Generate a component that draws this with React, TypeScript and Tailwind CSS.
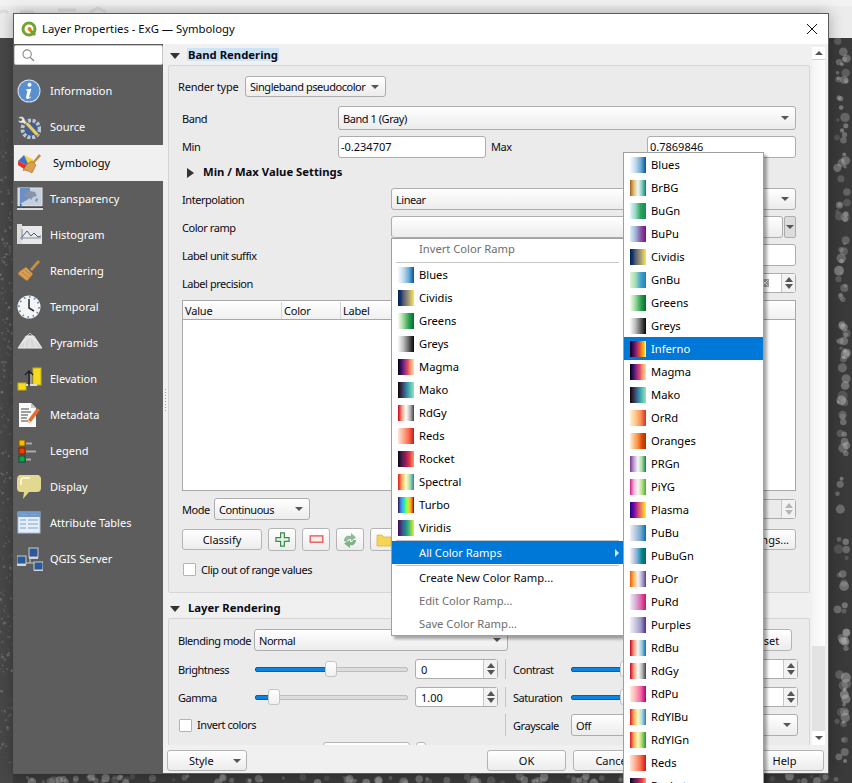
import React from "react";

const sideItems = [
  "Information",
  "Source",
  "Symbology",
  "Transparency",
  "Histogram",
  "Rendering",
  "Temporal",
  "Pyramids",
  "Elevation",
  "Metadata",
  "Legend",
  "Display",
  "Attribute Tables",
  "QGIS Server",
];

const ramps: Record<string, string> = {
  Blues: "bg-[linear-gradient(90deg,#f7fbff,#c6dbef,#6baed6,#08519c)]",
  BrBG: "bg-[linear-gradient(90deg,#a6611a,#dfc27d,#f5f5f5,#80cdc1,#018571)]",
  BuGn: "bg-[linear-gradient(90deg,#e5f5f9,#99d8c9,#2ca25f,#1b8c4e)]",
  BuPu: "bg-[linear-gradient(90deg,#e0ecf4,#9ebcda,#8856a7,#810f7c)]",
  Cividis: "bg-[linear-gradient(90deg,#00224e,#123570,#575c6d,#7c7b78,#a59c74,#d3c164,#fee838)]",
  GnBu: "bg-[linear-gradient(90deg,#e0f3db,#a8ddb5,#43a2ca,#1f80b8)]",
  Greens: "bg-[linear-gradient(90deg,#f7fcf5,#a1d99b,#31a354,#006d2c)]",
  Greys: "bg-[linear-gradient(90deg,#fafafa,#bdbdbd,#636363,#050505)]",
  Inferno: "bg-[linear-gradient(90deg,#000004,#420a68,#932667,#dd513a,#fca50a,#fcff64)]",
  Magma: "bg-[linear-gradient(90deg,#000004,#3b0f70,#8c2981,#de4968,#fe9f6d,#fcdcb0)]",
  Mako: "bg-[linear-gradient(90deg,#0b0405,#3e3356,#357ba3,#49c1ad,#a0dfb9)]",
  OrRd: "bg-[linear-gradient(90deg,#fef0d9,#fdcc8a,#fc8d59,#d7301f)]",
  Oranges: "bg-[linear-gradient(90deg,#feedde,#fdbe85,#fd8d3c,#d94701,#a63603)]",
  PRGn: "bg-[linear-gradient(90deg,#7b3294,#c2a5cf,#f7f7f7,#a6dba0,#008837)]",
  PiYG: "bg-[linear-gradient(90deg,#d01c8b,#f1b6da,#f7f7f7,#b8e186,#4dac26)]",
  Plasma: "bg-[linear-gradient(90deg,#0d0887,#7e03a8,#cc4778,#f89540,#f0f921)]",
  PuBu: "bg-[linear-gradient(90deg,#f1eef6,#bdc9e1,#74a9cf,#0570b0)]",
  PuBuGn: "bg-[linear-gradient(90deg,#f6eff7,#bdc9e1,#67a9cf,#02818a,#016c59)]",
  PuOr: "bg-[linear-gradient(90deg,#e66101,#fdb863,#f7f7f7,#b2abd2,#5e3c99)]",
  PuRd: "bg-[linear-gradient(90deg,#f1eef6,#d7b5d8,#df65b0,#ce1256)]",
  Purples: "bg-[linear-gradient(90deg,#f2f0f7,#cbc9e2,#9e9ac8,#54278f)]",
  RdBu: "bg-[linear-gradient(90deg,#ca0020,#f4a582,#f7f7f7,#92c5de,#0571b0)]",
  RdGy: "bg-[linear-gradient(90deg,#ca0020,#f4a582,#ffffff,#bababa,#404040)]",
  RdPu: "bg-[linear-gradient(90deg,#feebe2,#fbb4b9,#f768a1,#ae017e)]",
  RdYlBu: "bg-[linear-gradient(90deg,#d7191c,#fdae61,#ffffbf,#abd9e9,#2c7bb6)]",
  RdYlGn: "bg-[linear-gradient(90deg,#d7191c,#fdae61,#ffffc0,#a6d96a,#1a9641)]",
  Reds: "bg-[linear-gradient(90deg,#fee5d9,#fcae91,#fb6a4a,#cb181d)]",
  Rocket: "bg-[linear-gradient(90deg,#03051a,#4c1d4b,#a11a5b,#e83f3f,#f69c73)]",
  Spectral: "bg-[linear-gradient(90deg,#d7191c,#fdae61,#ffffbf,#abdda4,#2b83ba)]",
  Turbo: "bg-[linear-gradient(90deg,#30123b,#4662d7,#36aaf9,#1ae4b6,#72fe5e,#c8ef34,#faba39,#f66b19,#7a0403)]",
  Viridis: "bg-[linear-gradient(90deg,#440154,#3b528b,#21918c,#5ec962,#fde725)]",
};

const favourites = ["Blues", "Cividis", "Greens", "Greys", "Magma", "Mako", "RdGy", "Reds", "Rocket", "Spectral", "Turbo", "Viridis"];
const allRamps = [
  "Blues", "BrBG", "BuGn", "BuPu", "Cividis", "GnBu", "Greens", "Greys", "Inferno", "Magma", "Mako", "OrRd",
  "Oranges", "PRGn", "PiYG", "Plasma", "PuBu", "PuBuGn", "PuOr", "PuRd", "Purples", "RdBu", "RdGy", "RdPu",
  "RdYlBu", "RdYlGn", "Reds", "Rocket",
];

function SideIcon({ name }: { name: string }) {
  switch (name) {
    case "Information":
      return (
        <svg viewBox="0 0 24 24" className="h-6 w-6">
          <circle cx="12" cy="12" r="11.5" fill="#d6e2f2" />
          <circle cx="12" cy="12" r="10.5" fill="#5a8fd0" />
          <path d="M12.6 3.8a2 2 0 1 1 -.1 4 2 2 0 0 1 .1-4zM9 10.4l5.4-.6-2.3 8c-.1.5.3.6 1.6-.3l.4.6c-1.7 2-5.4 3-5-.2l1.3-5.6c.1-.8-.6-.8-1.5-.8z" fill="#fff" />
        </svg>
      );
    case "Source":
      return (
        <svg viewBox="0 0 24 24" className="h-6 w-6">
          <circle cx="14" cy="14" r="8.5" fill="none" stroke="#b9c6d8" strokeWidth="4" strokeDasharray="3 1.6" />
          <circle cx="14" cy="14" r="6.5" fill="#3f5f9c" />
          <path d="M1 3c2-2 5-2 6 0 1 1 1 2 1 3l4 3-2 2-4-3c-2 .5-4.500 0-5-3l3 1 1-2z" fill="#e8e8e8" stroke="#555" strokeWidth=".5" />
          <path d="M8 9l3-2 11 12-3 2z" fill="#e8cf6a" stroke="#6b6033" strokeWidth=".6" />
        </svg>
      );
    case "Symbology":
      return (
        <svg viewBox="0 0 26 24" className="h-6 w-[26px]">
          <path d="M7 4l10 5-5 6z" fill="#f2d33a" />
          <path d="M1 10l6-6 5 11z" fill="#3d70c9" />
          <path d="M1 10l11 5-2 5L1 14z" fill="#e4342c" />
          <path d="M15 12l7-9 2 2-8 8.500z" fill="#bf8b45" />
          <path d="M10 13l5-3 4 4-4 8-6-3-3 .5z" fill="#d9a050" stroke="#9c6a28" strokeWidth=".6" />
        </svg>
      );
    case "Transparency":
      return (
        <svg viewBox="0 0 26 24" className="h-6 w-[26px]">
          <rect x="1" y="1" width="24" height="18" fill="#c4cfe0" stroke="#e8e8e8" />
          <path d="M3 1h10v10L3 17z" fill="#6d8fc4" />
          <path d="M8 7l5-3 5 1 2 4-4 1-2 3-2-3-4 0zM19 11l2 1-1 3-2-1z" fill="#8894a6" />
          <rect x="0" y="19.500" width="26" height="1" fill="#333" />
          <rect x="0" y="21" width="26" height="2" fill="#d8d8d8" />
          <rect x="3" y="17" width="1.500" height="4" fill="#2f63b0" />
        </svg>
      );
    case "Histogram":
      return (
        <svg viewBox="0 0 26 24" className="h-6 w-[26px]">
          <rect x="1" y="3" width="24" height="18" fill="#e8e8e8" />
          <rect x="0" y="1" width="5" height="20" fill="#dcdcdc" />
          <path d="M5 17V6M3 15h21" stroke="#777" strokeWidth=".8" fill="none" />
          <path d="M5 14l5-6 4 5 3-3 4 4 3-1" stroke="#3d5f98" strokeWidth="1" fill="none" />
        </svg>
      );
    case "Rendering":
      return (
        <svg viewBox="0 0 24 24" className="h-6 w-6">
          <path d="M13 10l8-9 2 2-8 9z" fill="#c58f45" />
          <path d="M9 8l7 7-6 7-9-7 1-2z" fill="#d99f55" stroke="#a9732d" strokeWidth=".7" />
          <path d="M5 13l7 6M8 11l6 5" stroke="#a9732d" strokeWidth=".7" />
        </svg>
      );
    case "Temporal":
      return (
        <svg viewBox="0 0 24 24" className="h-6 w-6">
          <circle cx="12" cy="12" r="11.5" fill="#f4f4f4" />
          <circle cx="12" cy="12" r="10" fill="none" stroke="#5c80b8" strokeWidth="1.600" strokeDasharray="1.600 3.600" />
          <path d="M12 4v9l5 3" stroke="#333" strokeWidth="1.600" fill="none" />
        </svg>
      );
    case "Pyramids":
      return (
        <svg viewBox="0 0 26 24" className="h-6 w-[26px]">
          <path d="M9 5h8l8 12H1z" fill="#d8d8d8" stroke="#eee" strokeWidth=".8" />
          <path d="M13 2l-3 3h6zM5 11l8-6 8 6M3 14l10-9 10 9M13 5v12M9 8l-2 9M17 8l2 9" stroke="#f5f5f5" strokeWidth=".6" fill="none" />
          <rect x="1" y="17" width="24" height="1" fill="#aaa" />
        </svg>
      );
    case "Elevation":
      return (
        <svg viewBox="0 0 26 24" className="h-6 w-[26px]">
          <rect x="16" y="1" width="8" height="17" fill="#f5dc1d" stroke="#c7ae10" />
          <rect x="1" y="16" width="8" height="7" fill="#f5dc1d" stroke="#c7ae10" />
          <path d="M9 18h11" stroke="#ddd" strokeWidth="2" />
          <path d="M12 19V5M8 8l4-4 4 4" stroke="#222" strokeWidth="1.500" fill="none" />
          <path d="M14 19V7" stroke="#ddd" strokeWidth="1" />
        </svg>
      );
    case "Metadata":
      return (
        <svg viewBox="0 0 24 24" className="h-6 w-6">
          <path d="M2 0h12l5 5v19H2z" fill="#fafafa" />
          <path d="M14 0v5h5z" fill="#c8c8c8" />
          <path d="M4 6h8M4 9h10M4 12h7M4 15h6M4 18h10" stroke="#444" strokeWidth="1" />
          <path d="M11 17l9-12 3 2-9 12-3 1z" fill="#e56d2f" />
          <path d="M11 17l3 2-3 1z" fill="#f3d9b5" />
        </svg>
      );
    case "Legend":
      return (
        <svg viewBox="0 0 24 24" className="h-6 w-6">
          <rect x="2" y="1" width="6" height="6" fill="#fcb900" stroke="#7a5a00" />
          <rect x="2" y="9" width="6" height="6" fill="#ee4000" stroke="#7a2000" />
          <rect x="2" y="17" width="6" height="6" fill="#09a84a" stroke="#04502a" />
          <path d="M9 4.500h6M9 12.500h10M9 20.500h5" stroke="#aaa" strokeWidth="2" />
        </svg>
      );
    case "Display":
      return (
        <svg viewBox="0 0 24 24" className="h-6 w-6">
          <path d="M5 0h14a4 4 0 0 1 5 4v9a4 4 0 0 1-4 4h-8l-6 7 1-7H4a4 4 0 0 1-4-4V4a4 4 0 0 1 5-4z" fill="#e3d88f" />
          <path d="M4 10V5a2 2 0 0 1 2-2h7" stroke="#fffbe0" strokeWidth="1.500" fill="none" />
        </svg>
      );
    case "Attribute Tables":
      return (
        <svg viewBox="0 0 24 24" className="h-6 w-6">
          <rect x="1" y="1" width="22" height="21" fill="#e6eef8" stroke="#a8c0dd" />
          <rect x="1" y="1" width="22" height="5" fill="#6f9bd1" />
          <path d="M4 3.500h6M14 3.500h6M3 9h6M11 9h10M3 13h6M11 13h10M3 17h6M11 17h10" stroke="#7fa3cf" strokeWidth="1.200" />
        </svg>
      );
    default:
      return (
        <svg viewBox="0 0 26 24" className="h-6 w-[26px]">
          <path d="M13 10v6M4 17v-1h18" stroke="#ccc" strokeWidth="1" fill="none" />
          <rect x="12" y="1" width="9" height="9" fill="#2a5a9a" stroke="#ccc" />
          <rect x="12" y="10" width="9" height="2" fill="#d4d4d4" />
          <rect x="0" y="9" width="9" height="8" fill="#2a5a9a" stroke="#ccc" />
          <rect x="0" y="17" width="9" height="2" fill="#d4d4d4" />
          <rect x="17" y="15" width="9" height="8" fill="#2a5a9a" stroke="#ccc" />
          <rect x="17" y="23" width="9" height="1" fill="#d4d4d4" />
        </svg>
      );
  }
}

function Arrow({ className = "" }: { className?: string }) {
  return <span className={`h-0 w-0 shrink-0 border-x-[4px] border-t-[4px] border-x-transparent border-t-[#555] ${className}`} />;
}

function Combo({ text, className = "" }: { text?: string; className?: string }) {
  return (
    <div className={`flex h-full items-center justify-between rounded-[3px] border border-[#adadad] bg-gradient-to-b from-white to-[#ececec] pl-[4px] pr-[6px] ${className}`}>
      <span>{text}</span>
      <Arrow />
    </div>
  );
}

function Input({ text, className = "" }: { text?: string; className?: string }) {
  return (
    <div className={`flex h-full items-center rounded-[3px] border border-[#adadad] bg-white pb-[2px] pl-[2px] tracking-normal ${className}`}>{text}</div>
  );
}

function Spin({ text, className = "", disabled = false, clear = false }: { text?: string; className?: string; disabled?: boolean; clear?: boolean }) {
  const col = disabled ? "border-b-[#b5b5b5]" : "border-b-[#555]";
  const colT = disabled ? "border-t-[#b5b5b5]" : "border-t-[#555]";
  return (
    <div className={`flex h-full items-center rounded-[3px] border border-[#adadad] pl-[5px] tracking-normal ${disabled ? "bg-[#ebebeb]" : "bg-white"} ${className}`}>
      <span className="flex-1">{text}</span>
      {clear && (
        <svg viewBox="0 0 8 8" className="mr-[12px] h-[8px] w-[8px]">
          <rect width="8" height="8" fill="#a8a8a8" />
          <path d="M1.500 1.500l5 5M6.500 1.500l-5 5" stroke="#fff" strokeWidth="1" />
        </svg>
      )}
      <div className="flex h-full w-[14px] flex-col items-center justify-center gap-[2px] border-l border-[#c8c8c8] bg-[#f2f2f2]">
        <span className={`h-0 w-0 border-x-[4px] border-b-[5px] border-x-transparent ${col}`} />
        <span className={`h-0 w-0 border-x-[4px] border-t-[5px] border-x-transparent ${colT}`} />
      </div>
    </div>
  );
}

function Btn({ text, className = "", children }: { text?: string; className?: string; children?: React.ReactNode }) {
  return (
    <div className={`flex items-center justify-center rounded-[3px] border border-[#b4b4b4] bg-gradient-to-b from-white to-[#ececec] tracking-normal ${className}`}>
      {text}
      {children}
    </div>
  );
}

function Check({ className = "" }: { className?: string }) {
  return <span className={`block h-[13px] w-[13px] shrink-0 rounded-[1px] border border-[#b4b4b4] bg-white ${className}`} />;
}

function Slider({ value, className = "" }: { value: number; className?: string }) {
  return (
    <div className={`relative flex h-[16px] items-center ${className}`}>
      <div className="h-[5px] w-full rounded-[2px] border border-[#bdbdbd] bg-[#dcdcdc]" />
      <div className="absolute left-0 h-[5px] rounded-l-[2px] border border-[#0a5fa8] bg-[#0a84e0]" style={{ width: value }} />
      <div className="absolute top-0 h-[16px] w-[12px] rounded-[3px] border border-[#c4c4c4] bg-gradient-to-b from-white to-[#f0f0f0]" style={{ left: value - 1 }} />
    </div>
  );
}

function Swatch({ name }: { name: string }) {
  return <span className={`block h-4 w-4 shrink-0 ${ramps[name]}`} />;
}

function MenuItem({ name, active = false }: { name: string; active?: boolean }) {
  return (
    <div className={`flex h-[23px] items-center gap-[5px] pl-[6px] ${active ? "bg-[#0078d7] text-white" : "text-black"}`}>
      <Swatch name={name} />
      <span>{name}</span>
    </div>
  );
}

function MenuSep() {
  return (
    <div className="flex h-[2px] items-center px-[4px]">
      <div className="h-px w-full bg-[#c4c4c4]" />
    </div>
  );
}

function Backdrop() {
  // speckled raster behind the dialog
  const dots: { x: number; y: number; r: number; o: number }[] = [];
  let seed = 7;
  const rnd = () => {
    seed = (seed * 16807) % 2147483647;
    return seed / 2147483647;
  };
  for (let i = 0; i < 130; i++) {
    dots.push({ x: 837 + rnd() * 10, y: 40 + rnd() * 740, r: 1.5 + rnd() * 3.5, o: 0.2 + rnd() * 0.3 });
  }
  for (let i = 0; i < 110; i++) {
    dots.push({ x: 20 + rnd() * 830, y: 776 + rnd() * 7, r: 1.5 + rnd() * 3, o: 0.15 + rnd() * 0.35 });
  }
  for (let i = 0; i < 220; i++) {
    dots.push({ x: rnd() * 12, y: 130 + rnd() * 640, r: 0.5 + rnd() * 1, o: 0.08 + rnd() * 0.22 });
  }
  return (
    <svg className="absolute inset-0" width="852" height="783">
      <rect width="852" height="783" fill="#3a3a3a" />
      <rect x="0" y="38" width="13" height="745" fill="#474747" />
      {dots.map((d, i) => (
        <circle key={i} cx={d.x} cy={d.y} r={d.r} fill="#b8b8b8" opacity={d.o} />
      ))}
      <rect width="852" height="38" fill="#ececec" />
      <rect x="0" y="0" width="852" height="6" fill="#f2f2f2" />
      <path d="M0 13a5 5 0 0 1 8 0M20 12h14M58 10h18M90 12l8-4 8 4" stroke="#dcdcdc" strokeWidth="3" fill="none" />
    </svg>
  );
}

export default function App() {
  return (
    <div className="relative h-[783px] w-[852px] overflow-hidden whitespace-nowrap font-['Noto_Sans',sans-serif] text-[11px] leading-none text-[#0a0a14]">
      <Backdrop />

      <div className="absolute left-[13px] top-[13px] flex h-[761px] w-[816px] flex-col border border-[#5a5a5a] bg-[#f0f0f0] shadow-[0_0_14px_rgba(0,0,0,0.3)]">
        {/* title bar */}
        <div className="flex h-[30px] shrink-0 items-center bg-white pl-[7px] pr-[10px]">
          <svg viewBox="0 0 16 16" className="h-4 w-4">
            <circle cx="8" cy="8" r="6" fill="none" stroke="#6fa52c" strokeWidth="3" />
            <path d="M9 9l5 5" stroke="#6fa52c" strokeWidth="3" />
            <circle cx="8.500" cy="8" r="2" fill="#ee7913" />
          </svg>
          <span className="ml-[5px] text-[11.3px]">Layer Properties - ExG — Symbology</span>
          <svg viewBox="0 0 12 12" className="ml-auto h-[12px] w-[12px]">
            <path d="M1 1l10 10M11 1L1 11" stroke="#111" strokeWidth="1" />
          </svg>
        </div>

        <div className="flex min-h-0 flex-1">
          {/* sidebar */}
          <div className="flex w-[149px] shrink-0 flex-col bg-[#5d5d5d]">
            <div className="mt-px flex h-[20px] items-center rounded-[2px] border border-[#c8c8c8] bg-white pl-[7px]">
              <svg viewBox="0 0 14 14" className="h-[13px] w-[13px]">
                <circle cx="5.500" cy="5.500" r="4.500" fill="none" stroke="#888" strokeWidth="1.200" />
                <path d="M9 9l4 4" stroke="#888" strokeWidth="1.400" />
              </svg>
            </div>
            <div className="pt-[8px]">
              {sideItems.map((name) => {
                const active = name === "Symbology";
                return (
                  <div
                    key={name}
                    className={`flex h-[36px] items-center pl-[3px] ${active ? "bg-[#f0f0f0] text-black" : "text-white"}`}
                  >
                    <span className="flex w-[33px] shrink-0 justify-start">
                      <SideIcon name={name} />
                    </span>
                    <span className={active ? "ml-[3px] pb-[2px]" : "pb-[2px]"}>{name}</span>
                  </div>
                );
              })}
            </div>
          </div>

          {/* right side */}
          <div className="flex min-w-0 flex-1 flex-col">
            <div className="flex h-[701px] shrink-0">
              {/* splitter */}
              <div className="flex w-[5px] shrink-0 flex-col items-center justify-center gap-[2px] pt-[10px]">
                {[0, 1, 2, 3, 4, 5, 6, 7].map((i) => (
                  <span key={i} className="h-px w-px bg-[#a0a0a0]" />
                ))}
              </div>

              {/* scroll content */}
              <div className="w-[642px] shrink-0 overflow-hidden tracking-[-0.45px]">
                <div className="mt-[3px] flex h-[18px] items-center pb-[3px] pl-[2px]">
                  <span className="mt-[3px] h-0 w-0 border-x-[5px] border-t-[6px] border-x-transparent border-t-[#333]" />
                  <span className="ml-[7px] bg-[#cde4f7] px-px py-px text-[11.3px] font-bold tracking-normal">Band Rendering</span>
                </div>

                <div className="h-[528px] rounded-[2px] border border-[#d6d6d6] bg-[#ebebeb] px-[13px]">
                  <div className="-ml-[4px] mt-[10px] flex h-[21px] items-center">
                    <span className="w-[67px] tracking-[-0.2px]">Render type</span>
                    <Combo text="Singleband pseudocolor" className="w-[141px]" />
                  </div>
                  <div className="mt-[9px] flex h-[24px] items-center">
                    <span className="w-[156px]">Band</span>
                    <Combo text="Band 1 (Gray)" className="flex-1" />
                  </div>
                  <div className="mt-[6px] flex h-[22px] items-center">
                    <span className="w-[156px] pb-[2px]">Min</span>
                    <Input text="-0.234707" className="w-[148px]" />
                    <span className="ml-[5px] w-[156px] pb-[2px]">Max</span>
                    <Input text="0.7869846" className="flex-1" />
                  </div>
                  <div className="mt-[7px] flex h-[16px] items-center pl-[5px]">
                    <span className="h-0 w-0 border-y-[5px] border-l-[7px] border-y-transparent border-l-[#333]" />
                    <span className="ml-[9px] pb-[2px] text-[11.3px] font-bold tracking-normal">Min / Max Value Settings</span>
                  </div>
                  <div className="mt-[7px] flex h-[22px] items-center">
                    <span className="w-[209px]">Interpolation</span>
                    <Combo text="Linear" className="flex-1" />
                  </div>
                  <div className="mt-[6px] flex h-[22px] items-center">
                    <span className="w-[209px]">Color ramp</span>
                    <div className="h-full flex-1 rounded-[3px] border border-[#adadad] bg-gradient-to-b from-white to-[#ececec]" />
                    <div className="ml-px flex h-full w-[12px] items-center justify-center rounded-[2px] border border-[#adadad] bg-[#dcdcdc]">
                      <Arrow />
                    </div>
                  </div>
                  <div className="mt-[6px] flex h-[22px] items-center">
                    <span className="w-[209px]">Label unit suffix</span>
                    <Input className="flex-1" />
                  </div>
                  <div className="mt-[7px] flex h-[20px] items-center">
                    <span className="w-[209px] pt-px">Label precision</span>
                    <Spin className="flex-1" clear />
                  </div>
                  <div className="mt-[7px] h-[191px] border border-[#a8a8a8] bg-white">
                    <div className="flex h-[19px] border-b border-[#a8a8a8] bg-gradient-to-b from-white to-[#f0f0f0] pt-px tracking-[-0.2px]">
                      <span className="flex w-[99px] items-center border-r border-[#d4d4d4] pl-[2px]">Value</span>
                      <span className="flex w-[59px] items-center border-r border-[#d4d4d4] pl-[2px]">Color</span>
                      <span className="flex flex-1 items-center pl-[2px]">Label</span>
                    </div>
                  </div>
                  <div className="mt-[7px] flex h-[22px] items-center">
                    <span className="w-[32px] pt-px">Mode</span>
                    <Combo text="Continuous" className="w-[96px]" />
                    <div className="ml-auto h-[20px] w-[120px]">
                      <Spin disabled />
                    </div>
                  </div>
                  <div className="mt-[8px] flex h-[23px] items-center gap-[6px]">
                    <Btn text="Classify" className="h-[21px] w-[80px]" />
                    <Btn className="h-full w-[28px]">
                      <svg viewBox="0 0 16 16" className="h-[15px] w-[15px]">
                        <path d="M6 1h4v5h5v4h-5v5H6v-5H1V6h5z" fill="#e8f3e6" stroke="#3f8a4c" strokeWidth="1.300" />
                      </svg>
                    </Btn>
                    <Btn className="h-full w-[28px]">
                      <svg viewBox="0 0 16 10" className="h-[9px] w-[15px]">
                        <rect x="1" y="1" width="14" height="7" fill="#fdeeee" stroke="#e84b4b" strokeWidth="1.400" />
                      </svg>
                    </Btn>
                    <Btn className="h-full w-[28px]">
                      <svg viewBox="0 0 16 16" className="h-[16px] w-[16px]">
                        <path d="M2 9c0-4 3-6 7-5V1l5 4.500L9 9V7c-2-.5-4 .5-4 3z" fill="#8cbc96" />
                        <path d="M14 8c0 4-3 6-6 5v3l-6-4.500L8 8v2c2 .5 3-.5 3-2z" fill="#7fb08a" />
                      </svg>
                    </Btn>
                    <Btn className="h-full w-[28px]">
                      <svg viewBox="0 0 16 14" className="h-[14px] w-[16px]">
                        <path d="M1 2h5l2 2h7v9H1z" fill="#f6d455" stroke="#d8b23a" strokeWidth=".7" />
                      </svg>
                    </Btn>
                    <Btn text="Legend Settings..." className="ml-auto h-[21px] w-[106px]" />
                  </div>
                  <div className="mt-[11px] flex h-[14px] items-center gap-[5px] pl-px">
                    <Check />
                    <span className="pt-px">Clip out of range values</span>
                  </div>
                </div>

                <div className="mt-[7px] flex h-[17px] items-center pl-[2px]">
                  <span className="h-0 w-0 border-x-[5px] border-t-[6px] border-x-transparent border-t-[#333]" />
                  <span className="ml-[8px] pb-[2px] text-[11.3px] font-bold tracking-normal">Layer Rendering</span>
                </div>

                <div className="mt-px h-[200px] rounded-[2px] border border-[#d6d6d6] bg-[#ebebeb] pl-[9px] pr-[11px]">
                  <div className="mt-[10px] flex h-[22px] items-center">
                    <span className="w-[76px]">Blending mode</span>
                    <Combo text="Normal" className="w-[254px]" />
                    <Btn text="Reset" className="ml-auto mr-[6px] h-full w-[54px]" />
                  </div>
                  <div className="mt-[8px] flex h-[20px] items-center">
                    <span className="w-[77px]">Brightness</span>
                    <Slider value={71} className="w-[153px]" />
                    <Spin text="0" className="ml-[7px] w-[83px]" />
                    <span className="ml-[7px] h-full w-px bg-[#c4c4c4]" />
                    <span className="ml-[7px] w-[58px]">Contrast</span>
                    <Slider value={50} className="w-[102px]" />
                    <Spin text="0" className="ml-[7px] flex-1" />
                  </div>
                  <div className="mt-[8px] flex h-[20px] items-center">
                    <span className="w-[77px]">Gamma</span>
                    <Slider value={14} className="w-[153px]" />
                    <Spin text="1.00" className="ml-[7px] w-[83px]" />
                    <span className="ml-[7px] h-full w-px bg-[#c4c4c4]" />
                    <span className="ml-[7px] w-[58px]">Saturation</span>
                    <Slider value={50} className="w-[102px]" />
                    <Spin text="0" className="ml-[7px] flex-1" />
                  </div>
                  <div className="mt-[7px] flex h-[22px] items-center">
                    <Check className="ml-px" />
                    <span className="ml-[5px] w-[308px] pb-[2px]">Invert colors</span>
                    <span className="h-full w-px bg-[#c4c4c4]" />
                    <span className="ml-[7px] w-[58px]">Grayscale</span>
                    <Combo text="Off" className="flex-1" />
                  </div>
                  <div className="mt-[6px] flex h-[20px] pl-[145px]">
                    <div className="w-[87px] rounded-[3px] border border-[#b4b4b4] bg-white" />
                    <div className="ml-[6px] w-[10px] rounded-[3px] border border-[#b4b4b4] bg-white" />
                  </div>
                </div>
              </div>

              {/* scrollbar */}
              <div className="ml-[2px] mt-[3px] flex w-[13px] shrink-0 flex-col">
                <div className="flex h-[13px] items-center justify-center border-b border-[#d0d0d0] bg-white">
                  <span className="h-0 w-0 border-x-[4px] border-b-[4px] border-x-transparent border-b-[#555]" />
                </div>
                <div className="h-[586px] bg-gradient-to-r from-[#f4f4f4] to-white" />
                <div className="flex-1 bg-[#e3e3e3]" />
                <div className="flex h-[14px] items-center justify-center bg-white">
                  <Arrow />
                </div>
              </div>
            </div>

            {/* button row */}
            <div className="flex flex-1 items-start gap-[7px] px-[4px] pt-[5px]">
              <div className="flex h-[21px] w-[80px] items-center justify-between rounded-[3px] border border-[#b4b4b4] bg-gradient-to-b from-white to-[#ececec] pl-[21px] pr-[5px]">
                <span>Style</span>
                <Arrow />
              </div>
              <Btn text="OK" className="ml-auto h-[21px] w-[79px] border-[#4a9ce0]" />
              <Btn text="Cancel" className="h-[21px] w-[79px]" />
              <Btn text="Apply" className="h-[21px] w-[79px]" />
              <Btn text="Help" className="h-[21px] w-[79px]" />
            </div>
          </div>
        </div>
      </div>

      {/* first level of the color ramp menu */}
      <div className="absolute left-[391px] top-[238px] w-[233px] border border-[#a0a0a0] bg-white text-[11.2px] shadow-[3px_3px_3px_rgba(0,0,0,0.35)]">
        <div className="flex h-[22px] items-center pb-[2px] pl-[27px] text-[#6d6d6d]">Invert Color Ramp</div>
        <MenuSep />
        {favourites.map((n) => (
          <MenuItem key={n} name={n} />
        ))}
        <MenuSep />
        <div className="flex h-[23px] items-center justify-between bg-[#0078d7] pl-[27px] pr-[4px] text-white">
          <span>All Color Ramps</span>
          <span className="h-0 w-0 border-y-[4px] border-l-[4px] border-y-transparent border-l-[#d8e8f8]" />
        </div>
        <MenuSep />
        <div className="flex h-[23px] items-center pl-[27px]">Create New Color Ramp...</div>
        <div className="flex h-[23px] items-center pl-[27px] text-[#6d6d6d]">Edit Color Ramp...</div>
        <div className="flex h-[23px] items-center pl-[27px] text-[#6d6d6d]">Save Color Ramp...</div>
      </div>

      {/* All Color Ramps submenu, runs off the bottom of the screen */}
      <div className="absolute left-[623px] top-[152px] w-[141px] border border-[#a0a0a0] bg-white text-[11.2px] shadow-[3px_3px_3px_rgba(0,0,0,0.35)]">
        {allRamps.map((n) => (
          <MenuItem key={n} name={n} active={n === "Inferno"} />
        ))}
      </div>
    </div>
  );
}
